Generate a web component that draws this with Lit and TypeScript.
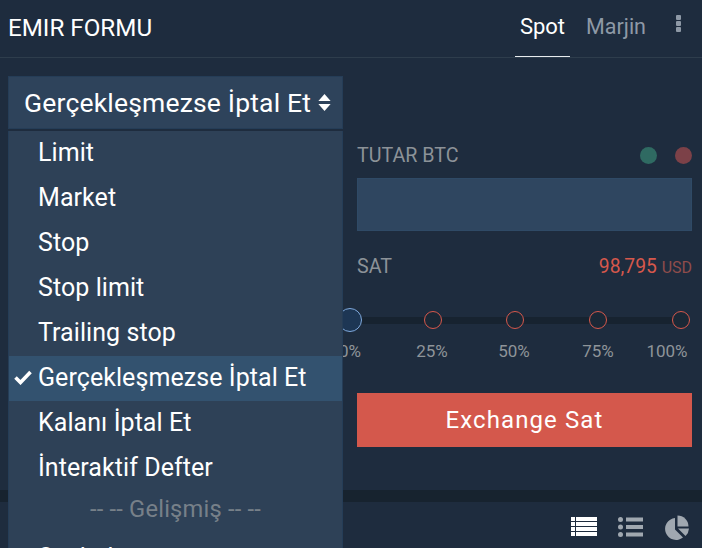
import { LitElement, html, css, svg } from "lit";
import { customElement } from "lit/decorators.js";

const items = ["Limit", "Market", "Stop", "Stop limit", "Trailing stop", "Gerçekleşmezse İptal Et", "Kalanı İptal Et", "İnteraktif Defter"];
const marks = [
  { p: 0, x: 350, lx: 350 },
  { p: 25, x: 433, lx: 432 },
  { p: 50, x: 515, lx: 514 },
  { p: 75, x: 598, lx: 598 },
  { p: 100, x: 681, lx: 667 },
];

@customElement("app-root")
export class AppRoot extends LitElement {
  static styles = css`
    :host { display: block; width: 702px; height: 548px; overflow: hidden; position: relative; background: #1e2c3e; font-family: Roboto, "Liberation Sans", sans-serif; color: #fff; }
    * { box-sizing: border-box; }
    .head { height: 58px; border-bottom: 1px solid #2e3d4c; display: flex; align-items: stretch; padding-left: 8px; }
    .title { font-size: 24.200px; line-height: 57px; flex: 1; }
    .tabs { display: flex; margin-right: 21px; }
    .tab { font-size: 21.500px; line-height: 54px; color: #8e99a6; height: 57px; text-align: center; white-space: nowrap; }
    .tab.on { color: #fff; font-size: 22px; width: 55px; border-bottom: 1px solid #e8ecef; margin-right: 16px; }
    .tab.m { margin-right: 30px; }
    .dots { display: flex; flex-direction: column; gap: 1px; padding-top: 15px; width: 5px; }
    .dots i { width: 5px; height: 5px; border-radius: 1px; background: #8e99a6; display: block; }
    .form { height: 432px; padding: 85px 10px 0 357px; display: flex; flex-direction: column; }
    .row { display: flex; justify-content: space-between; align-items: center; height: 24px; font-size: 19.700px; color: #8c9298; }
    .lights { display: flex; gap: 18px; }
    .lights i { display: block; width: 17px; height: 17px; border-radius: 50%; }
    .input { height: 53px; margin-top: 11px; background: #2f4660; border: 1px solid #2f4a66; }
    .sat { margin-top: 23px; }
    .price { color: #d6584c; font-size: 19.300px; }
    .price small { font-size: 16px; color: #8f4c4b; margin-left: 0; }
    .slider { position: relative; height: 60px; margin: 11px -10px 0 -357px; }
    .track { position: absolute; left: 340px; width: 350px; top: 28px; height: 7px; background: #172330; }
    .dot { position: absolute; top: 22px; width: 18px; height: 18px; margin-left: -9px; border-radius: 50%; border: 1px solid #d6584c; background: #1a2836; }
    .dot.first { top: 19px; width: 24px; height: 24px; margin-left: -12px; border-color: #7fa9dc; background: #1d3654; }
    .lbl { position: absolute; top: 52px; font-size: 17px; line-height: 20px; color: #8e9499; transform: translateX(-50%); }
    .btn { margin-top: 44px; height: 54px; background: #d4584c; display: flex; align-items: center; justify-content: center; font-size: 24px; font-weight: 400; letter-spacing: 1.100px; flex: none; }
    .band { height: 12px; background: #17232f; }
    .foot { height: 46px; display: flex; justify-content: flex-end; align-items: center; padding: 4px 13px 0 0; gap: 21px; }
    .foot svg { display: block; }
    .drop { position: absolute; left: 8px; top: 76px; width: 335px; }
    .sel { height: 53px; background: #2e435b; border: 1px solid #253d57; display: flex; align-items: center; padding-left: 15px; font-size: 26.500px; letter-spacing: 0.180px; gap: 7px; white-space: nowrap; }
    .list { margin-top: 2px; height: 420px; background: #2e4157; border: 1px solid #253d57; border-top: 0; padding-top: 0; overflow: hidden; }
    .it { position: relative; height: 45px; line-height: 43px; padding-left: 29px; font-size: 25px; letter-spacing: 0.070px; white-space: nowrap; }
    .it.on { background: #33526f; }
    .it svg { position: absolute; left: 5px; top: 14px; }
    .group { height: 45px; line-height: 37px; text-align: center; font-size: 23.700px; color: #778089; letter-spacing: 0.200px; }
  `;

  render() {
    return html`
      <div class="head">
        <div class="title">EMIR FORMU</div>
        <div class="tabs">
          <div class="tab on">Spot</div>
          <div class="tab m">Marjin</div>
          <div class="dots"><i></i><i></i><i></i></div>
        </div>
      </div>
      <div class="form">
        <div class="row"><span>TUTAR BTC</span><span class="lights"><i style="background:#2f6a62"></i><i style="background:#7c4148"></i></span></div>
        <div class="input"></div>
        <div class="row sat"><span>SAT</span><span class="price">98,795 <small>USD</small></span></div>
        <div class="slider">
          <div class="track"></div>
          ${marks.map(m => html`
            <div class="dot ${m.p === 0 ? "first" : ""}" style="left:${m.x}px"></div>
            <div class="lbl" style="left:${m.lx}px">${m.p}%</div>`)}
        </div>
        <div class="btn">Exchange Sat</div>
      </div>
      <div class="band"></div>
      <div class="foot">
        <svg width="26" height="20" viewBox="0 0 26 20" fill="#fff">
          ${[0, 5, 10, 15].map(y => svg`<rect x="0" y="${y}" width="4" height="4"/><rect x="5" y="${y}" width="21" height="4"/>`)}
        </svg>
        <svg width="25" height="20" viewBox="0 0 25 20" fill="#a0a8b0">
          ${[2.5, 10, 17.5].map(y => svg`<circle cx="2.500" cy="${y}" r="2.500"/><rect x="8" y="${y - 2}" width="17" height="4"/>`)}
        </svg>
        <svg width="25" height="25" viewBox="0 0 25 25" fill="#a0a8b0">
          <path d="M11 3A11 11 0 1 0 19 22.500L11 14.500Z"/>
          <path d="M13.500 0.500A11 11 0 0 1 24.500 11.500H13.500Z"/>
          <path d="M14 13.500H25A11 11 0 0 1 21.500 21Z"/>
        </svg>
      </div>
      <div class="drop">
        <div class="sel">Gerçekleşmezse İptal Et
          <svg width="13" height="17" viewBox="0 0 13 18" fill="#fff"><path d="M6.500 0L13 7.500H0Z"/><path d="M0 10.500H13L6.500 18Z"/></svg>
        </div>
        <div class="list">
          ${items.map(t => html`<div class="it ${t === "Gerçekleşmezse İptal Et" ? "on" : ""}">
            ${t === "Gerçekleşmezse İptal Et" ? html`<svg width="18" height="15" viewBox="0 0 18 15" fill="none" stroke="#fff" stroke-width="3.600"><path d="M1.500 7.500L6.500 12.500L16.500 2"/></svg>` : ""}${t}</div>`)}
          <div class="group">-- -- Gelişmiş -- --</div>
          <div class="it">Scaled</div>
        </div>
      </div>
    `;
  }
}
